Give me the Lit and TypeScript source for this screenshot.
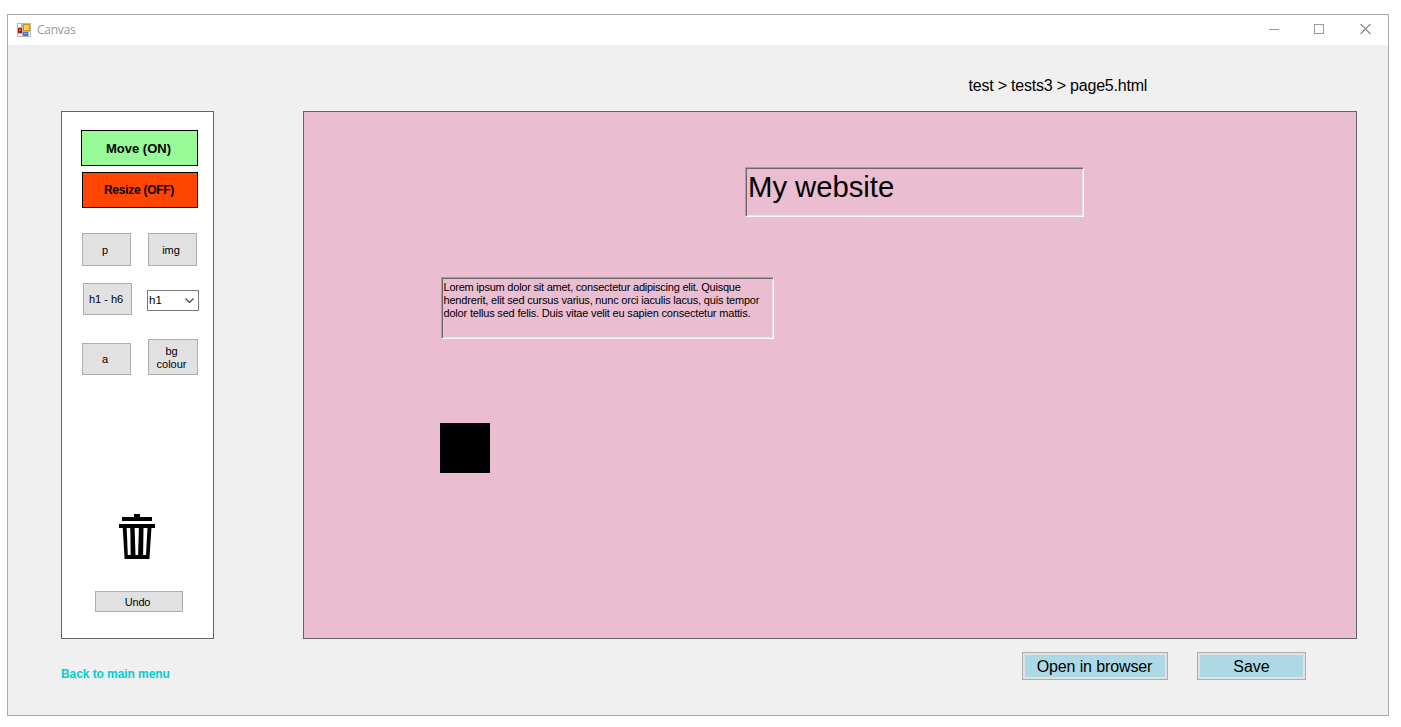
import { LitElement, html, css } from "lit";
import { customElement } from "lit/decorators.js";

@customElement("app-root")
export class AppRoot extends LitElement {
  static styles = css`
    :host {
      display: block;
      box-sizing: border-box;
      height: 727px;
      padding: 14px 0 0 7px;
      background: #fff;
      overflow: hidden;
      color: #000;
      font-family: "Liberation Sans", Arial, sans-serif;
    }
    * { box-sizing: border-box; }
    button { font-family: inherit; color: #000; margin: 0; padding: 0; border-radius: 0; }
    svg { display: block; flex: none; }
    .window {
      width: 1382px;
      height: 702px;
      border: 1px solid #aaa;
      background: #f0f0f0;
      display: flex;
      flex-direction: column;
    }
    .titlebar {
      flex: none;
      height: 30px;
      background: #fff;
      display: flex;
      align-items: center;
      padding: 0 17px 0 9px;
    }
    .title {
      flex: 1;
      margin-left: 6px;
      font: 12px/16px "Open Sans", "Noto Sans", sans-serif;
      letter-spacing: -0.25px;
      color: #999;
    }
    .controls { display: flex; gap: 35px; padding-bottom: 2px; }
    .controls svg:last-child { margin-left: 1px; }
    .client { flex: 1; display: flex; padding: 0 0 0 53px; }
    .left { width: 153px; padding-top: 66px; display: flex; flex-direction: column; }
    .toolbox {
      height: 528px;
      border: 1px solid #646464;
      background: #fff;
      display: flex;
      flex-direction: column;
      padding: 18px 14px 0 19px;
    }
    .toggle {
      border: 1px solid #000;
      height: 36px;
      font-weight: 700;
      flex: none;
    }
    .move { background: #98fb98; font-size: 13px; width: 117px; padding-right: 2px; }
    .resize {
      background: #ff4500;
      font-size: 12px;
      width: 116px;
      margin: 6px 0 0 1px;
      letter-spacing: -0.27px;
      padding: 0 2px 1px 0;
    }
    .row { display: flex; flex: none; padding-left: 1px; }
    .row.first { margin-top: 25px; gap: 17px; }
    .row.heading { margin-top: 17px; padding-left: 2px; gap: 15px; }
    .row.last { margin-top: 24px; gap: 17px; align-items: flex-end; }
    .tool {
      border: 1px solid #adadad;
      background: #e1e1e1;
      font-size: 11px;
      line-height: 13px;
      width: 49px;
      height: 33px;
      padding: 2px 3px 0 0;
    }
    .tool.short { height: 32px; padding-top: 0; }
    .tool.tall { width: 50px; height: 36px; padding: 1px 3px 0 0; }
    .tool.undo { width: 88px; height: 21px; margin: 32px 0 0 14px; padding-top: 1px; letter-spacing: -0.2px; }
    .combo {
      width: 52px;
      height: 21px;
      margin-top: 7px;
      border: 1px solid #7a7a7a;
      background: #fff;
      display: flex;
      align-items: center;
      justify-content: space-between;
      padding: 0 4px 0 1px;
      font-size: 11.5px;
      line-height: 13px;
    }
    .trash { margin: 139px 0 0 38px; }
    .back {
      margin-top: 28px;
      font-size: 12px;
      line-height: 14px;
      font-weight: 700;
      letter-spacing: -0.07px;
      color: #00ced1;
      white-space: nowrap;
    }
    .right { width: 1054px; margin-left: 89px; display: flex; flex-direction: column; }
    .path {
      height: 66px;
      padding: 32px 0 0 665.5px;
      font-size: 16px;
      line-height: 18px;
      letter-spacing: -0.21px;
      white-space: nowrap;
    }
    .canvas {
      position: relative;
      height: 528px;
      border: 1px solid #646464;
      background: #eabdd0;
    }
    .node {
      position: absolute;
      border: 1px solid;
      border-color: #a0a0a0 #fff #fff #a0a0a0;
      box-shadow: inset 1px 1px 0 #696969, inset -1px -1px 0 #e3e3e3;
      white-space: nowrap;
    }
    .h1 { left: 441px; top: 55px; width: 339px; height: 50px; padding: 2px 0 0 2px; font-size: 29.33px; line-height: 34px; letter-spacing: -0.05px; }
    .p { left: 137px; top: 165px; width: 333px; height: 62px; padding: 3px 0 0 1.5px; font-size: 11px; line-height: 13px; }
    .line { display: block; letter-spacing: -0.185px; }
    .line.tight { letter-spacing: -0.23px; }
    .img { position: absolute; left: 136px; top: 311px; width: 50px; height: 50px; background: #000; }
    .actions { display: flex; gap: 29px; margin: 13px 0 0 719px; }
    .action {
      height: 28px;
      border: 1px solid #adadad;
      background: #add8e6;
      box-shadow: inset 0 0 0 2px #e1e1e1;
      font-size: 16px;
      line-height: 18px;
      padding-top: 2px;
    }
    .open { width: 146px; letter-spacing: -0.12px; padding-right: 1px; }
    .save { width: 109px; }
  `;

  render() {
    return html`
      <div class="window">
        <div class="titlebar">
          <svg width="14" height="14" viewBox="0 0 14 14" shape-rendering="crispEdges">
            <rect width="14" height="14" fill="#b8b8b8" />
            <rect x="1" y="1" width="3" height="3" fill="#fff" />
            <rect x="1" y="11" width="4" height="2" fill="#fff" />
            <rect x="12" y="9" width="1" height="4" fill="#fff" />
            <rect x="1" y="5" width="4" height="5" fill="#b81414" />
            <rect x="2" y="6" width="2" height="2" fill="#e8584c" />
            <rect x="6" y="1" width="7" height="7" fill="#c89410" />
            <rect x="7" y="2" width="5" height="5" fill="#ffcf48" />
            <rect x="6" y="9" width="5" height="4" fill="#3a78dc" />
            <rect x="7" y="10" width="3" height="1" fill="#86b4f4" />
          </svg>
          <span class="title">Canvas</span>
          <div class="controls">
            <svg width="10" height="10"><rect y="5" width="10" height="1" fill="#999" /></svg>
            <svg width="10" height="10"><rect x=".5" y=".5" width="9" height="9" fill="none" stroke="#999" /></svg>
            <svg width="11" height="10" viewBox="0 0 11 10"><path d="M.5 0 10.5 10M10.5 0 .5 10" stroke="#888" stroke-width="1.2" fill="none" /></svg>
          </div>
        </div>
        <div class="client">
          <div class="left">
            <div class="toolbox">
              <button class="toggle move">Move (ON)</button>
              <button class="toggle resize">Resize (OFF)</button>
              <div class="row first">
                <button class="tool">p</button>
                <button class="tool">img</button>
              </div>
              <div class="row heading">
                <button class="tool short">h1 - h6</button>
                <div class="combo">
                  <span>h1</span>
                  <svg width="9" height="5" viewBox="0 0 9 5"><path d="M.5 .5l4 4 4-4" fill="none" stroke="#444" stroke-width="1.2" /></svg>
                </div>
              </div>
              <div class="row last">
                <button class="tool short">a</button>
                <button class="tool tall">bg<br />colour</button>
              </div>
              <svg class="trash" width="36" height="45" viewBox="0 0 36 45">
                <path d="M15 0h6v3h12v4H3V3h12zM0 10h36v4H0z" />
                <path
                  fill-rule="evenodd"
                  d="M3.7 13h28.8L30.4 45H5.6zM7.7 14l1.1 27h2.9L11.3 14zM15.6 14l.9 27h2.6L19.9 14zM24.5 14l-.4 27h2.9L28.5 14z"
                />
              </svg>
              <button class="tool undo">Undo</button>
            </div>
            <span class="back">Back to main menu</span>
          </div>
          <div class="right">
            <div class="path">test &gt; tests3 &gt; page5.html</div>
            <div class="canvas">
              <div class="node h1">My website</div>
              <div class="node p">
                <span class="line tight">Lorem ipsum dolor sit amet, consectetur adipiscing elit. Quisque</span>
                <span class="line">hendrerit, elit sed cursus varius, nunc orci iaculis lacus, quis tempor</span>
                <span class="line">dolor tellus sed felis. Duis vitae velit eu sapien consectetur mattis.</span>
              </div>
              <div class="img"></div>
            </div>
            <div class="actions">
              <button class="action open">Open in browser</button>
              <button class="action save">Save</button>
            </div>
          </div>
        </div>
      </div>
    `;
  }
}
